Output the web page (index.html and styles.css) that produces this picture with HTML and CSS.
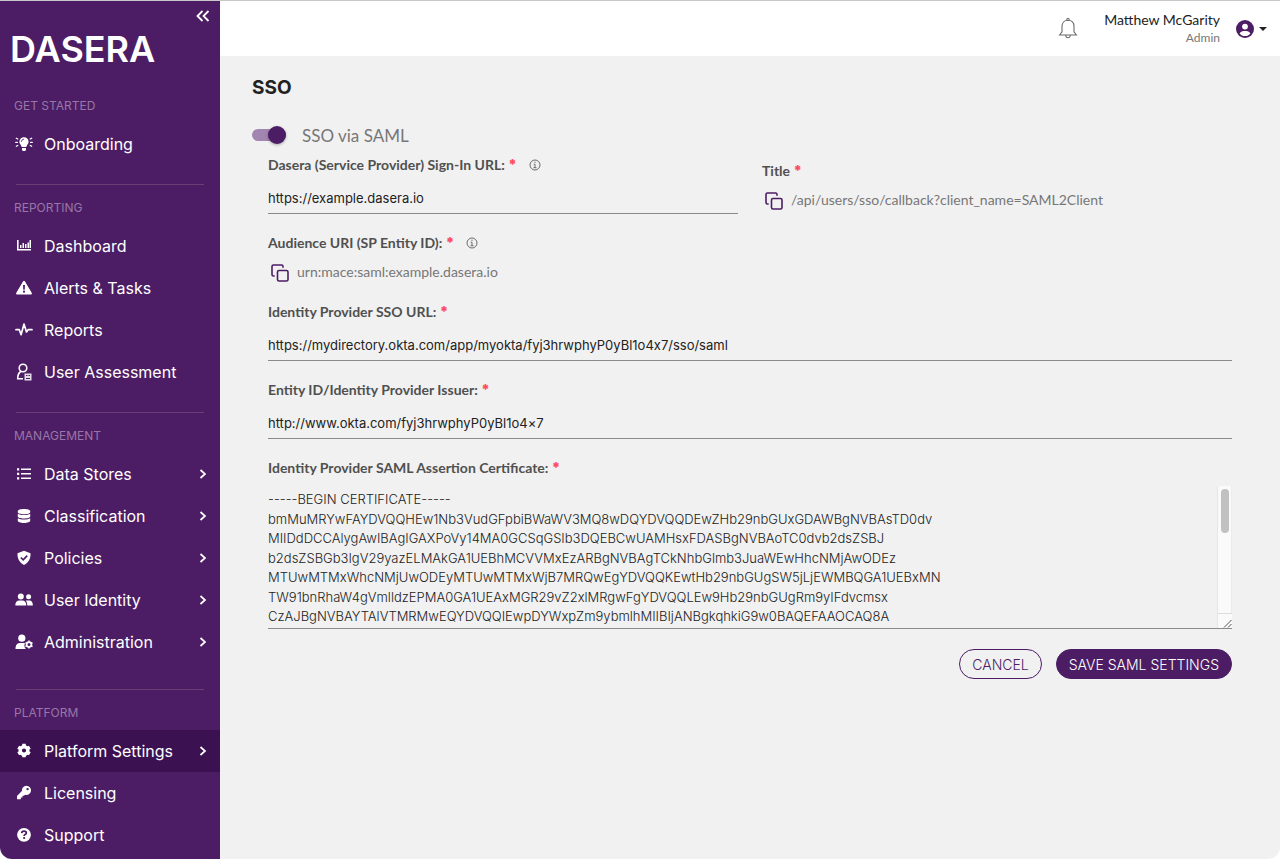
FILE: index.html
```html
<!DOCTYPE html>
<html lang="en">
<head>
    <meta charset="UTF-8">
    <meta name="viewport" content="width=device-width, initial-scale=1.0">
    <title>Dasera - SSO</title>
    <link rel="stylesheet" href="styles.css">
</head>
<body>
<div class="app">

    <aside class="sidebar">
        <div class="sidebar-top">
            <button class="collapse" aria-label="Collapse menu">
                <svg width="14" height="12" viewBox="0 0 14 12" fill="none" stroke="currentColor" stroke-width="1.8"><path d="M6.5 1 1.500 6l5 5M12.500 1l-5 5 5 5"/></svg>
            </button>
        </div>
        <a class="logo" href="#">DASERA</a>

        <nav>
            <section class="nav-section">
                <h2>GET STARTED</h2>
                <a class="nav-item" href="#">
                    <svg class="icon" viewBox="0 0 18 16"><path fill="currentColor" d="M9 1.200a4.600 4.600 0 0 0-4.600 4.600c0 2.100 1.700 3 2.300 5.200h4.600c.6-2.200 2.300-3.100 2.300-5.200A4.600 4.600 0 0 0 9 1.200zM7 12h4v1.500a1.500 1.500 0 0 1-1.500 1.500h-1A1.500 1.500 0 0 1 7 13.500z"/><path stroke="currentColor" stroke-width="1.300" stroke-linecap="round" d="m1.300 2.200 1.500.8M.7 6.300h1.800M1.300 10.300l1.500-.8M16.700 2.200l-1.500.8M17.300 6.300h-1.800M16.700 10.300l-1.500-.8"/><path fill="none" stroke="#4c1d64" stroke-width=".8" d="M6.400 5.800A2.600 2.600 0 0 1 9 3.200"/></svg>
                    <span>Onboarding</span>
                </a>
            </section>

            <section class="nav-section">
                <h2>REPORTING</h2>
                <a class="nav-item" href="#">
                    <svg class="icon" viewBox="0 0 18 16"><path fill="none" stroke="currentColor" stroke-width="1.600" d="M2.800 2v9.700H16"/><path fill="currentColor" d="M5 7h1.500v3H5zM7.500 5H9v5H7.500zM10 6h1.500v4H10zM12.500 4.500H14V10h-1.500zM14.500 2H16v8h-1.500z"/></svg>
                    <span>Dashboard</span>
                </a>
                <a class="nav-item" href="#">
                    <svg class="icon" viewBox="0 0 18 16"><path fill="currentColor" fill-rule="evenodd" d="M8 1.600a1.200 1.200 0 0 1 2 0l6.700 11.200a1.100 1.100 0 0 1-1 1.700H2.300a1.100 1.100 0 0 1-1-1.700zM8 5l.3 4.800h1.400L10 5zM9 10.600a1.100 1.100 0 1 0 0 2.200 1.100 1.100 0 0 0 0-2.200z"/></svg>
                    <span>Alerts &amp; Tasks</span>
                </a>
                <a class="nav-item" href="#">
                    <svg class="icon" viewBox="0 0 18 16"><path fill="none" stroke="currentColor" stroke-width="1.700" stroke-linecap="round" stroke-linejoin="round" d="M1 7.700h3.300l1.800 5L9 2l2.500 8 1.600-2.300H17"/></svg>
                    <span>Reports</span>
                </a>
                <a class="nav-item" href="#">
                    <svg class="icon icon-tall" viewBox="0 0 18 18"><g fill="none" stroke="currentColor" stroke-width="1.600"><circle cx="8" cy="5" r="3.800"/><path d="M5.800 8.500C3.500 10 2.700 12.500 2.700 15.700H8"/></g><path fill="currentColor" fill-opacity=".85" fill-rule="evenodd" d="M9.500 10.500h7v7h-7zM11 12v1h1.500v-1zM13.500 12v1H15v-1zM11 15v1h4v-1z"/></svg>
                    <span>User Assessment</span>
                </a>
            </section>

            <section class="nav-section nav-section-long">
                <h2>MANAGEMENT</h2>
                <a class="nav-item" href="#">
                    <svg class="icon" viewBox="0 0 18 16"><path fill="currentColor" d="M2 2.200h2.200v2.200H2zM2 6.700h2.200v2.200H2zM2 11.200h2.200v2.200H2zM6 2.500h10v1.600H6zM6 7h10v1.600H6zM6 11.500h10v1.600H6z"/></svg>
                    <span>Data Stores</span>
                    <svg class="chevron" viewBox="0 0 8 10"><path d="m1.500 1 4.500 4-4.500 4"/></svg>
                </a>
                <a class="nav-item" href="#">
                    <svg class="icon" viewBox="0 0 18 16"><path fill="currentColor" d="M9 .9c3.500 0 6.200.9 6.200 2.100v1.200C15.200 5.300 12.500 6.200 9 6.200S2.800 5.300 2.800 4.200V3C2.800 1.800 5.500.9 9 .9zM2.800 5.800C4 6.700 6.500 7.100 9 7.100s5-.4 6.200-1.300v2.800c0 1.100-2.700 2-6.200 2s-6.200-.9-6.200-2zM2.800 10.200c1.200.9 3.700 1.300 6.200 1.300s5-.4 6.200-1.300v2.600c0 1.200-2.700 2.200-6.200 2.200s-6.200-1-6.200-2.200z"/></svg>
                    <span>Classification</span>
                    <svg class="chevron" viewBox="0 0 8 10"><path d="m1.500 1 4.500 4-4.500 4"/></svg>
                </a>
                <a class="nav-item" href="#">
                    <svg class="icon" viewBox="0 0 18 16"><path fill="currentColor" d="m9 .8 6.500 2.500C15.800 8.500 13.500 12.700 9 15 4.500 12.700 2.200 8.500 2.500 3.300z"/><path fill="none" stroke="#4c1d64" stroke-width="1.600" d="m5.800 7.500 2.400 2.400 4-4.300"/></svg>
                    <span>Policies</span>
                    <svg class="chevron" viewBox="0 0 8 10"><path d="m1.500 1 4.500 4-4.500 4"/></svg>
                </a>
                <a class="nav-item" href="#">
                    <svg class="icon" viewBox="0 0 18 16"><g fill="currentColor"><circle cx="5.800" cy="4.500" r="3"/><circle cx="13.600" cy="4.800" r="2.500"/><path d="M.3 13.500c0-3.300 1.700-5 4-5h3c2.300 0 4 1.700 4 5zM12.300 13.500c0-2-.5-3.700-1.600-4.900h3.800c2 0 3.400 1.700 3.400 4.900z"/></g></svg>
                    <span>User Identity</span>
                    <svg class="chevron" viewBox="0 0 8 10"><path d="m1.500 1 4.500 4-4.500 4"/></svg>
                </a>
                <a class="nav-item" href="#">
                    <svg class="icon" viewBox="0 0 18 16"><g fill="currentColor"><circle cx="6.800" cy="4.200" r="3.600"/><path d="M.5 15c0-4 1.800-6 4.300-6h3.700c.6 0 1 .1 1.500.3-1 2-.7 4.200.8 5.700z"/></g><circle cx="14" cy="10.600" r="2.400" fill="none" stroke="currentColor" stroke-width="1.800"/><path fill="none" stroke="currentColor" stroke-width="1.500" d="M14 6.600v1.200M14 13.400v1.200M10.500 8.600l1.100.6M16.400 12l1.100.6M10.500 12.600l1.100-.6M16.400 9.200l1.100-.6"/></svg>
                    <span>Administration</span>
                    <svg class="chevron" viewBox="0 0 8 10"><path d="m1.500 1 4.500 4-4.500 4"/></svg>
                </a>
            </section>

            <section class="nav-section">
                <h2>PLATFORM</h2>
                <a class="nav-item active" href="#">
                    <svg class="icon" viewBox="0 0 18 16"><circle cx="9" cy="7.500" r="3.800" fill="none" stroke="currentColor" stroke-width="3.400"/><path fill="none" stroke="currentColor" stroke-width="3.600" d="M9 .8v3M9 11.200v3M3.200 4.200l2.400 1.400M12.400 9.400l2.400 1.400M3.200 10.800l2.400-1.400M12.400 5.600l2.400-1.400"/></svg>
                    <span>Platform Settings</span>
                    <svg class="chevron" viewBox="0 0 8 10"><path d="m1.500 1 4.500 4-4.500 4"/></svg>
                </a>
                <a class="nav-item" href="#">
                    <svg class="icon" viewBox="0 0 18 16"><path fill="currentColor" fill-rule="evenodd" d="M11.300.7a4.600 4.600 0 1 1-1.200 9L9 10.800H7.500v1.700H5.800v1.700H2v-3.300l4.900-4.800A4.600 4.600 0 0 1 11.300.7zm1.300 2.200a1.200 1.200 0 1 0 0 2.400 1.200 1.200 0 0 0 0-2.400z"/></svg>
                    <span>Licensing</span>
                </a>
                <a class="nav-item" href="#">
                    <svg class="icon" viewBox="0 0 18 16"><circle cx="9" cy="7.800" r="6.900" fill="currentColor"/><path fill="none" stroke="#4c1d64" stroke-width="1.700" d="M6.700 6.100c.1-1.300 1-2 2.300-2s2.300.7 2.300 1.800c0 1.500-2.200 1.500-2.200 3.100"/><circle cx="9.100" cy="11" r="1.100" fill="#4c1d64"/></svg>
                    <span>Support</span>
                </a>
            </section>
        </nav>
    </aside>

    <div class="page">
        <header class="topbar">
            <button class="bell" aria-label="Notifications">
                <svg width="20" height="24" viewBox="0 0 20 24" fill="none" stroke="#6b6b6b" stroke-width="1.100"><path d="M10 3.200c-3.800 0-6 2.700-6 6.300v5.200L1.600 18h16.800L16 14.700V9.500c0-3.600-2.200-6.300-6-6.300zM8.900 3.200V2.300a1.100 1.100 0 0 1 2.200 0v.9M7.800 18.600a2.200 2.200 0 1 0 4.400 0"/></svg>
            </button>
            <div class="user">
                <div class="user-name">Matthew McGarity</div>
                <div class="user-role">Admin</div>
            </div>
            <button class="account" aria-label="Account menu">
                <svg width="18" height="18" viewBox="0 0 18 18"><circle cx="9" cy="9" r="9" fill="#4c1d64"/><circle cx="9" cy="6.600" r="2.900" fill="#fff"/><path fill="#fff" d="M3.600 13.400C4.600 11.600 6.600 11 9 11s4.400.6 5.400 2.400C13.200 15 11.200 16 9 16s-4.200-1-5.400-2.600z"/></svg>
                <svg width="8" height="4" viewBox="0 0 8 4"><path fill="#222" d="M0 0h8L4 4z"/></svg>
            </button>
        </header>

        <main>
            <h1>SSO</h1>
            <label class="toggle">
                <input type="checkbox" role="switch" checked>
                <span>SSO via SAML</span>
            </label>

            <form>
                <div class="two-col">
                    <div class="field">
                        <div class="label-row">
                            <label for="signInUrl">Dasera (Service Provider) Sign-In URL: <b>*</b></label>
                            <svg class="info" viewBox="0 0 12 12"><circle cx="6" cy="6" r="5"/><path d="M4.700 5.200H6v3.500M4.500 8.700h3M6 2.700v1.200"/></svg>
                        </div>
                        <input type="text" id="signInUrl" value="https://example.dasera.io">
                    </div>
                    <div class="field field-title">
                        <div class="label-row"><span>Title <b>*</b></span></div>
                        <div class="copy-row">
                            <button type="button" class="copy" aria-label="Copy callback path">
                                <svg width="18" height="18" viewBox="0 0 18 18"><rect x="6.500" y="6.500" width="10.500" height="10.500" rx="1.500"/><path d="M3.700 12H2.500A1.500 1.500 0 0 1 1 10.500v-8A1.500 1.500 0 0 1 2.500 1h8A1.500 1.500 0 0 1 12 2.500v1.200"/></svg>
                            </button>
                            <span>/api/users/sso/callback?client_name=SAML2Client</span>
                        </div>
                    </div>
                </div>

                <div class="field">
                    <div class="label-row">
                        <span>Audience URI (SP Entity ID): <b>*</b></span>
                        <svg class="info" viewBox="0 0 12 12"><circle cx="6" cy="6" r="5"/><path d="M4.700 5.200H6v3.500M4.500 8.700h3M6 2.700v1.200"/></svg>
                    </div>
                    <div class="copy-row">
                        <button type="button" class="copy" aria-label="Copy audience URI">
                            <svg width="18" height="18" viewBox="0 0 18 18"><rect x="6.500" y="6.500" width="10.500" height="10.500" rx="1.500"/><path d="M3.700 12H2.500A1.500 1.500 0 0 1 1 10.500v-8A1.500 1.500 0 0 1 2.500 1h8A1.500 1.500 0 0 1 12 2.500v1.200"/></svg>
                        </button>
                        <span>urn:mace:saml:example.dasera.io</span>
                    </div>
                </div>

                <div class="field">
                    <div class="label-row"><label for="ssoUrl">Identity Provider SSO URL: <b>*</b></label></div>
                    <input type="text" id="ssoUrl" value="https://mydirectory.okta.com/app/myokta/fyj3hrwphyP0yBl1o4x7/sso/saml">
                </div>

                <div class="field">
                    <div class="label-row"><label for="issuer">Entity ID/Identity Provider Issuer: <b>*</b></label></div>
                    <input type="text" id="issuer" value="http://www.okta.com/fyj3hrwphyP0yBl1o4×7">
                </div>

                <div class="field">
                    <div class="label-row"><label for="certificate">Identity Provider SAML Assertion Certificate: <b>*</b></label></div>
                    <div class="certificate">
                        <textarea id="certificate" spellcheck="false">-----BEGIN CERTIFICATE-----
bmMuMRYwFAYDVQQHEw1Nb3VudGFpbiBWaWV3MQ8wDQYDVQQDEwZHb29nbGUxGDAWBgNVBAsTD0dv
MIIDdDCCAlygAwIBAgIGAXPoVy14MA0GCSqGSIb3DQEBCwUAMHsxFDASBgNVBAoTC0dvb2dsZSBJ
b2dsZSBGb3IgV29yazELMAkGA1UEBhMCVVMxEzARBgNVBAgTCkNhbGlmb3JuaWEwHhcNMjAwODEz
MTUwMTMxWhcNMjUwODEyMTUwMTMxWjB7MRQwEgYDVQQKEwtHb29nbGUgSW5jLjEWMBQGA1UEBxMN
TW91bnRhaW4gVmlldzEPMA0GA1UEAxMGR29vZ2xlMRgwFgYDVQQLEw9Hb29nbGUgRm9yIFdvcmsx
CzAJBgNVBAYTAlVTMRMwEQYDVQQIEwpDYWxpZm9ybmlhMIIBIjANBgkqhkiG9w0BAQEFAAOCAQ8A</textarea>
                        <div class="scrollbar" aria-hidden="true">
                            <div class="scroll-track"><div class="scroll-thumb"></div></div>
                            <svg class="grip" viewBox="0 0 14 14"><path d="M6 13.500 13.500 6M10 13.500l3.500-3.500"/></svg>
                        </div>
                    </div>
                </div>

                <div class="actions">
                    <button type="button" class="btn">CANCEL</button>
                    <button type="submit" class="btn btn-primary">SAVE SAML SETTINGS</button>
                </div>
            </form>
        </main>
    </div>

</div>
</body>
</html>
```

FILE: styles.css
```css
:root {
    --purple: #4c1d64;
    --purple-dark: #3b1152;
    --page-bg: #f1f1f1;
    --text: #222;
    --label: #505050;
    --muted: #777;
    --line: #8a8a8a;
    --required: #ff4d5e;
}

* {
    box-sizing: border-box;
}
body {
    margin: 0;
    background: #fff;
    color: var(--text);
    font-family: Inter, "Liberation Sans", sans-serif;
}
button {
    background: none;
    border: none;
    padding: 0;
    color: inherit;
    cursor: pointer;
    font-family: inherit;
}
svg {
    display: block;
}
.app {
    display: flex;
    min-height: 100vh;
    border-top: 1px solid #c8c8c8;
    border-radius: 0 0 12px 12px;
    overflow: hidden;
    background: var(--page-bg);
}

/* Sidebar */
.sidebar {
    flex: 0 0 220px;
    background: var(--purple);
    color: #fff;
}
.sidebar-top {
    display: flex;
    justify-content: flex-end;
    padding: 9px 10px 0;
}
.logo {
    display: block;
    margin: 7px 0 14px 10px;
    color: #fff;
    font-size: 36px;
    font-weight: 600;
    line-height: 40px;
    text-decoration: none;
}
.nav-section {
    padding-bottom: 19px;
}
.nav-section-long {
    padding-bottom: 26px;
}
.nav-section + .nav-section::before {
    content: "";
    display: block;
    height: 1px;
    margin: 0 16px;
    background: #694074;
}
.nav-section:last-child {
    padding-bottom: 0;
}
.nav-section h2 {
    margin: 0;
    padding: 14px 14px 8px;
    color: #9877a8;
    font-size: 12px;
    font-weight: 400;
    line-height: 18px;
}
.nav-item {
    display: flex;
    align-items: center;
    height: 42px;
    padding: 0 13px 0 15px;
    color: #fff;
    font-size: 16px;
    text-decoration: none;
}
.nav-item.active {
    background: var(--purple-dark);
}
.nav-item span {
    flex: 1;
    margin-left: 11px;
}
.icon {
    width: 18px;
    height: 16px;
}
.icon-tall {
    height: 18px;
}
.chevron {
    width: 8px;
    height: 10px;
    fill: none;
    stroke: currentColor;
    stroke-width: 1.7;
}

/* Top bar */
.page {
    flex: 1;
    min-width: 0;
}
.topbar {
    display: flex;
    justify-content: flex-end;
    align-items: center;
    height: 55px;
    padding-right: 13px;
    background: #fff;
}
.user {
    margin: 0 16px 0 26px;
    font-family: Lato, sans-serif;
    text-align: right;
}
.user-name {
    font-size: 14px;
    line-height: 18px;
}
.user-role {
    color: var(--muted);
    font-size: 12px;
    line-height: 18px;
}
.account {
    display: flex;
    align-items: center;
    gap: 5px;
}

/* Content */
main {
    padding: 16px 48px 0 32px;
}
h1 {
    margin: 0;
    font-size: 19px;
    font-weight: 700;
    line-height: 32px;
}
.toggle {
    display: flex;
    align-items: center;
    gap: 16px;
    height: 24px;
    margin-top: 19px;
    color: var(--muted);
    font-family: Lato, sans-serif;
    font-size: 17px;
}
.toggle input {
    appearance: none;
    display: flex;
    justify-content: flex-end;
    align-items: center;
    width: 34px;
    height: 12px;
    margin: 0;
    border-radius: 6px;
    background: #a286b1;
}
.toggle input::before {
    content: "";
    width: 18px;
    height: 18px;
    border-radius: 50%;
    background: var(--purple);
    box-shadow: 0 1px 3px rgba(0, 0, 0, 0.3);
}
form {
    display: flex;
    flex-direction: column;
    gap: 19px;
    margin: 8px 0 0 16px;
}
.two-col {
    display: grid;
    grid-template-columns: 1fr 1fr;
    gap: 24px;
}
.label-row {
    display: flex;
    align-items: center;
    gap: 12px;
    color: var(--label);
    font-family: Lato, sans-serif;
    font-size: 14px;
    font-weight: 700;
    line-height: 20px;
}
.label-row b {
    color: var(--required);
    font-family: Inter, sans-serif;
}
.info {
    width: 12px;
    height: 12px;
    fill: none;
    stroke: #6b6b6b;
}
.field-title {
    padding-top: 6px;
}
.copy-row {
    display: flex;
    align-items: center;
    gap: 8px;
    height: 20px;
    margin: 10px 0 0 3px;
    color: var(--muted);
    font-family: Lato, sans-serif;
    font-size: 14px;
    line-height: 20px;
}
.copy-row span {
    padding-bottom: 2px;
}
.copy svg {
    fill: none;
    stroke: var(--purple);
    stroke-width: 1.6;
}
.field input,
.field textarea {
    display: block;
    width: 100%;
    margin: 0;
    padding: 0;
    border: none;
    border-bottom: 1px solid var(--line);
    border-radius: 0;
    outline: none;
    background: transparent;
    color: var(--text);
    font-family: Inter, "Liberation Sans", sans-serif;
    font-size: 13px;
    font-feature-settings: "calt" 0;
}
.field input {
    height: 31px;
    margin-top: 8px;
}
.certificate {
    position: relative;
    margin-top: 8px;
}
.field textarea {
    height: 143px;
    padding: 4px 15px 0 0;
    font-weight: 300;
    line-height: 1.5;
    resize: none;
    scrollbar-width: none;
}
.scrollbar {
    position: absolute;
    top: 0;
    right: 0;
    bottom: 1px;
    display: flex;
    flex-direction: column;
    width: 15px;
    border-left: 1px solid #e6e6e6;
    background: #fafafa;
}
.scroll-track {
    flex: 1;
    padding: 3px;
    border-right: 1px solid #ececec;
}
.scroll-thumb {
    width: 8px;
    height: 44px;
    border-radius: 4px;
    background: #c1c1c1;
}
.grip {
    width: 14px;
    height: 15px;
    border-top: 1px solid #dcdcdc;
    fill: none;
    stroke: #555;
}

.actions {
    display: flex;
    justify-content: flex-end;
    gap: 14px;
    margin-top: 1px;
}
.btn {
    height: 30px;
    padding: 0 12px;
    border: 1px solid var(--purple);
    border-radius: 15px;
    color: var(--purple);
    font-size: 14px;
    font-weight: 300;
}
.btn-primary {
    background: var(--purple);
    color: #fff;
}
```
